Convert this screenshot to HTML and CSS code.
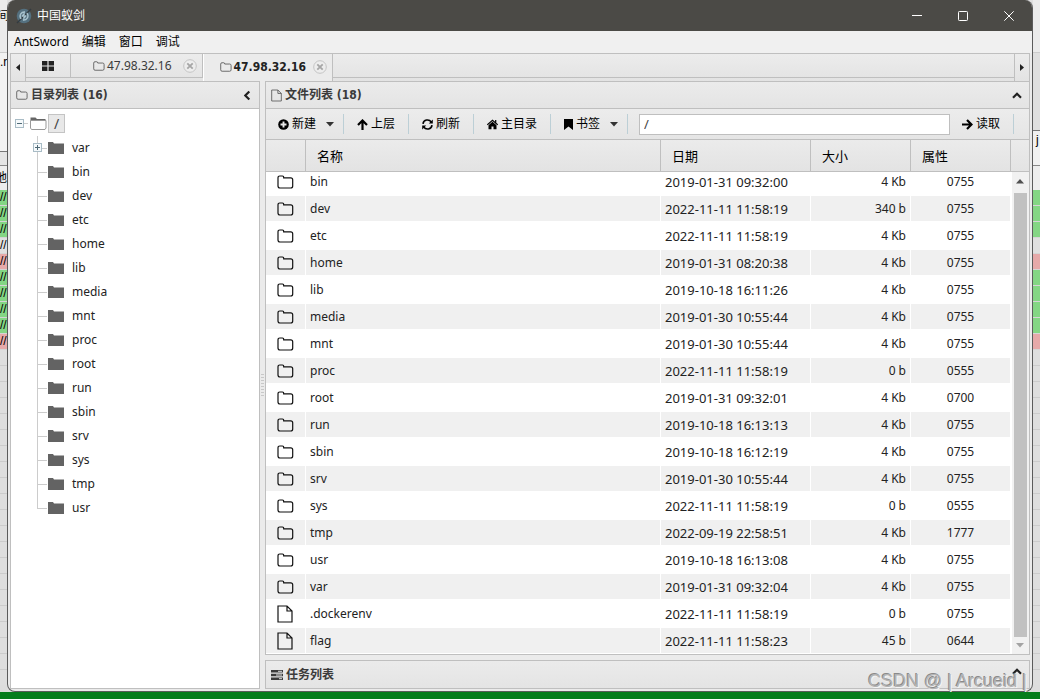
FILE: index.html
```html
<!DOCTYPE html>
<html lang="zh-CN">
<head>
<meta charset="utf-8">
<title>中国蚁剑</title>
<link rel="stylesheet" href="styles.css">
</head>
<body>
<svg class="sprite" aria-hidden="true">
  <symbol id="folder-o" viewBox="0 0 17 14"><path d="M1 2.8Q1 1 2.800 1H5.400Q6.700 1 6.700 2.800H13.700Q15.700 2.800 15.700 4.800V11Q15.700 13 13.700 13H3Q1 13 1 11Z" fill="none" stroke="currentColor" stroke-width="1.2"/></symbol>
  <symbol id="file-o" viewBox="0 0 16 18"><path d="M1 1H10L15 6V17H1ZM10 1V6H15" fill="none" stroke="currentColor" stroke-width="1.200"/></symbol>
  <symbol id="folder" viewBox="0 0 16 13"><path d="M0 0H5L6 1.500H16V12H0Z" fill="#636363"/></symbol>
  <symbol id="caret" viewBox="0 0 8 5"><path d="M0 0H8L4 4.500Z" fill="currentColor"/></symbol>
  <symbol id="chev" viewBox="0 0 10 7"><path d="M1 5.800L5 1.800L9 5.800" fill="none" stroke="currentColor" stroke-width="2.200"/></symbol>
  <symbol id="close" viewBox="0 0 14 14"><circle cx="7" cy="7" r="6.300" fill="#ededed" stroke="#c4c4c4"/><path d="M4.300 4.300L9.700 9.700M9.700 4.300L4.300 9.700" stroke="#a6a6a6" stroke-width="1.800"/></symbol>
</svg>
<div class="desktop">
  <div class="strip strip-left" aria-hidden="true">
    <div class="s-head">间</div><div class="s-pane">.r</div><div class="s-gap"></div><div class="s-title">地</div>
    <div class="s-row ok">//</div><div class="s-row ok">//</div><div class="s-row ok">//</div><div class="s-row">//</div><div class="s-row bad">//</div><div class="s-row ok">//</div><div class="s-row ok">//</div><div class="s-row ok">//</div><div class="s-row ok">//</div><div class="s-row bad">//</div>
    <div class="s-rest"></div>
  </div>
  <main class="window">
    <header class="titlebar">
      <svg class="logo" viewBox="0 0 16 16"><circle cx="8" cy="8" r="7.300" fill="#54707f"/><path d="M1 15L15 1" stroke="#333b40" stroke-width="1.500"/><path d="M5 11C2.500 7 5.500 3.500 9 4M11 5C13.500 9 10.500 12.500 7 12M6 8.500L8 6V10L10 7.500" fill="none" stroke="#a9c3ce" stroke-width="1.400"/></svg>
      <h1>中国蚁剑</h1>
      <div class="winctl">
        <button aria-label="最小化"><svg viewBox="0 0 10 10"><path d="M0 4.500H10" stroke="#fff"/></svg></button>
        <button aria-label="最大化"><svg viewBox="0 0 10 10"><rect x=".5" y=".5" width="9" height="9" rx=".8" fill="none" stroke="#fff"/></svg></button>
        <button aria-label="关闭"><svg viewBox="0 0 10 10"><path d="M.3 .3L9.700 9.700M9.700 .3L.3 9.700" stroke="#fff"/></svg></button>
      </div>
    </header>
    <nav class="menubar"><button>AntSword</button><button>编辑</button><button>窗口</button><button>调试</button></nav>
    <div class="content">
      <div class="tabbar">
        <button class="scroll-tab prev" aria-label="向左"><svg viewBox="0 0 4 7"><path d="M4 0V7L0 3.500Z" fill="#222"/></svg></button>
        <div class="tab home-tab"><button aria-label="主页"><svg class="grid-ico" viewBox="0 0 12 10"><path d="M0 0H5.400V4.400H0ZM6.600 0H12V4.400H6.600ZM0 5.600H5.400V10H0ZM6.600 5.600H12V10H6.600Z" fill="#222"/></svg></button></div>
        <div class="tab"><button><svg class="tab-folder"><use href="#folder-o"/></svg>47.98.32.16</button><button class="tab-close" aria-label="关闭标签"><svg><use href="#close"/></svg></button></div>
        <div class="tab active"><button><svg class="tab-folder"><use href="#folder-o"/></svg>47.98.32.16</button><button class="tab-close" aria-label="关闭标签"><svg><use href="#close"/></svg></button></div>
        <div class="tab-fill"></div>
        <button class="scroll-tab next" aria-label="向右"><svg viewBox="0 0 4 7"><path d="M0 0V7L4 3.500Z" fill="#222"/></svg></button>
      </div>
      <div class="panes">
        <section class="panel dirs">
          <div class="panel-head"><svg class="h-folder"><use href="#folder-o"/></svg><h2>目录列表 (16)</h2><button aria-label="折叠"><svg class="chev left"><use href="#chev"/></svg></button></div>
          <div class="tree">
            <div class="root"><button class="toggle" aria-label="收起"><svg viewBox="0 0 9 9"><rect x=".5" y=".5" width="8" height="8" fill="#f5f9fb" stroke="#a9bcc6"/><path d="M2 4.500H7" stroke="#4f6a76"/></svg></button><i class="dash"></i><svg class="open" viewBox="0 0 17 13"><path d="M.5 3V.5H5.500L7 2H15.500V4H.5Z" fill="#666"/><path d="M.5 3.500H16V11L15 12.500H1.500L.5 11Z" fill="#fff" stroke="#999"/></svg><button class="root-name">/</button></div>
            <ul>
              <li class="more"><button class="toggle" aria-label="展开"><svg viewBox="0 0 9 9"><rect x=".5" y=".5" width="8" height="8" fill="#f5f9fb" stroke="#a9bcc6"/><path d="M2 4.500H7M4.500 2V7" stroke="#4f6a76"/></svg></button><svg class="fo"><use href="#folder"/></svg>var</li>
              <li><svg class="fo"><use href="#folder"/></svg>bin</li>
              <li><svg class="fo"><use href="#folder"/></svg>dev</li>
              <li><svg class="fo"><use href="#folder"/></svg>etc</li>
              <li><svg class="fo"><use href="#folder"/></svg>home</li>
              <li><svg class="fo"><use href="#folder"/></svg>lib</li>
              <li><svg class="fo"><use href="#folder"/></svg>media</li>
              <li><svg class="fo"><use href="#folder"/></svg>mnt</li>
              <li><svg class="fo"><use href="#folder"/></svg>proc</li>
              <li><svg class="fo"><use href="#folder"/></svg>root</li>
              <li><svg class="fo"><use href="#folder"/></svg>run</li>
              <li><svg class="fo"><use href="#folder"/></svg>sbin</li>
              <li><svg class="fo"><use href="#folder"/></svg>srv</li>
              <li><svg class="fo"><use href="#folder"/></svg>sys</li>
              <li><svg class="fo"><use href="#folder"/></svg>tmp</li>
              <li><svg class="fo"><use href="#folder"/></svg>usr</li>
            </ul>
          </div>
        </section>
        <div class="splitter"><i></i></div>
        <div class="right">
          <section class="panel files">
            <div class="panel-head"><svg class="h-file"><use href="#file-o"/></svg><h2>文件列表 (18)</h2><button aria-label="折叠"><svg class="chev"><use href="#chev"/></svg></button></div>
            <div class="toolbar">
              <button class="drop"><svg class="ti" viewBox="0 0 11 11"><circle cx="5.500" cy="5.500" r="5.300"/><path d="M5.500 2.500V8.500M2.500 5.500H8.500" stroke="#eaeaea" stroke-width="1.900"/></svg>新建<svg class="caret"><use href="#caret"/></svg></button>
              <button><svg class="ti" viewBox="0 0 11 11"><path d="M5.500 11V2M1 6L5.500 1.500L10 6" fill="none" stroke="#000" stroke-width="2.200"/></svg>上层</button>
              <button><svg class="ti" viewBox="0 0 11 11"><path d="M1 4.800C1.500 .5 7 -.2 9.300 2.900M10 6.200C9.500 10.500 4 11.200 1.700 8.100" fill="none" stroke="#000" stroke-width="1.600"/><path d="M10.800 .5V4.500H6.800ZM.2 10.500V6.500H4.200Z"/></svg>刷新</button>
              <button><svg class="ti" viewBox="0 0 11 11"><path d="M5.500 2.700L9.500 6.200V10.300H6.500V7.400H4.500V10.300H1.500V6.200Z"/><path d="M.3 5.800L5.500 1.300L10.700 5.800M8.700 1V4" fill="none" stroke="#000" stroke-width="1.200"/></svg>主目录</button>
              <button class="drop"><svg class="mark" viewBox="0 0 9 11"><path d="M0 0H9V11L4.500 7.500L0 11Z"/></svg>书签<svg class="caret"><use href="#caret"/></svg></button>
              <input type="text" value="/" aria-label="路径">
              <button class="go"><svg class="ti" viewBox="0 0 11 11"><path d="M0 5.500H9M5 1L9.500 5.500L5 10" fill="none" stroke="#000" stroke-width="2.200"/></svg>读取</button>
            </div>
            <div class="grid-head">
              <table><colgroup><col class="c-ico"><col><col class="c-date"><col class="c-size"><col class="c-attr"></colgroup>
                <thead><tr><th></th><th>名称</th><th>日期</th><th>大小</th><th>属性</th></tr></thead></table>
            </div>
            <div class="grid-body">
              <div class="rows">
              <table><colgroup><col class="c-ico"><col><col class="c-date"><col class="c-size"><col class="c-attr"></colgroup>
                <tbody>
                <tr><td><svg class="f"><use href="#folder-o"/></svg></td><td>bin</td><td>2019-01-31 09:32:00</td><td>4 Kb</td><td>0755</td></tr>
                <tr><td><svg class="f"><use href="#folder-o"/></svg></td><td>dev</td><td>2022-11-11 11:58:19</td><td>340 b</td><td>0755</td></tr>
                <tr><td><svg class="f"><use href="#folder-o"/></svg></td><td>etc</td><td>2022-11-11 11:58:19</td><td>4 Kb</td><td>0755</td></tr>
                <tr><td><svg class="f"><use href="#folder-o"/></svg></td><td>home</td><td>2019-01-31 08:20:38</td><td>4 Kb</td><td>0755</td></tr>
                <tr><td><svg class="f"><use href="#folder-o"/></svg></td><td>lib</td><td>2019-10-18 16:11:26</td><td>4 Kb</td><td>0755</td></tr>
                <tr><td><svg class="f"><use href="#folder-o"/></svg></td><td>media</td><td>2019-01-30 10:55:44</td><td>4 Kb</td><td>0755</td></tr>
                <tr><td><svg class="f"><use href="#folder-o"/></svg></td><td>mnt</td><td>2019-01-30 10:55:44</td><td>4 Kb</td><td>0755</td></tr>
                <tr><td><svg class="f"><use href="#folder-o"/></svg></td><td>proc</td><td>2022-11-11 11:58:19</td><td>0 b</td><td>0555</td></tr>
                <tr><td><svg class="f"><use href="#folder-o"/></svg></td><td>root</td><td>2019-01-31 09:32:01</td><td>4 Kb</td><td>0700</td></tr>
                <tr><td><svg class="f"><use href="#folder-o"/></svg></td><td>run</td><td>2019-10-18 16:13:13</td><td>4 Kb</td><td>0755</td></tr>
                <tr><td><svg class="f"><use href="#folder-o"/></svg></td><td>sbin</td><td>2019-10-18 16:12:19</td><td>4 Kb</td><td>0755</td></tr>
                <tr><td><svg class="f"><use href="#folder-o"/></svg></td><td>srv</td><td>2019-01-30 10:55:44</td><td>4 Kb</td><td>0755</td></tr>
                <tr><td><svg class="f"><use href="#folder-o"/></svg></td><td>sys</td><td>2022-11-11 11:58:19</td><td>0 b</td><td>0555</td></tr>
                <tr><td><svg class="f"><use href="#folder-o"/></svg></td><td>tmp</td><td>2022-09-19 22:58:51</td><td>4 Kb</td><td>1777</td></tr>
                <tr><td><svg class="f"><use href="#folder-o"/></svg></td><td>usr</td><td>2019-10-18 16:13:08</td><td>4 Kb</td><td>0755</td></tr>
                <tr><td><svg class="f"><use href="#folder-o"/></svg></td><td>var</td><td>2019-01-31 09:32:04</td><td>4 Kb</td><td>0755</td></tr>
                <tr><td><svg class="d"><use href="#file-o"/></svg></td><td>.dockerenv</td><td>2022-11-11 11:58:19</td><td>0 b</td><td>0755</td></tr>
                <tr><td><svg class="d"><use href="#file-o"/></svg></td><td>flag</td><td>2022-11-11 11:58:23</td><td>45 b</td><td>0644</td></tr>
                </tbody></table>
              </div>
              <div class="scrollbar"><svg class="sb up" viewBox="0 0 8 5"><path d="M0 4.500H8L4 0Z"/></svg><div class="thumb"></div><svg class="sb down" viewBox="0 0 8 5"><path d="M0 0H8L4 4.500Z"/></svg></div>
            </div>
          </section>
          <section class="panel tasks">
            <div class="panel-head"><svg class="h-tasks" viewBox="0 0 12 10"><path d="M0 0H12V2.600H0ZM0 3.700H12V6.300H0ZM0 7.400H12V10H0Z" fill="#3b3b3b"/><path d="M7 1.300H11M5 5H11M8 8.700H11" stroke="#ddd"/></svg><h2>任务列表</h2><button aria-label="展开"><svg class="chev"><use href="#chev"/></svg></button></div>
          </section>
        </div>
      </div>
    </div>
  </main>
  <div class="strip strip-right" aria-hidden="true">
    <div class="s-head"></div><div class="s-pane"></div><div class="s-gap">j</div><div class="s-title"></div>
    <div class="s-row ok"></div><div class="s-row ok"></div><div class="s-row ok"></div><div class="s-row"></div><div class="s-row bad"></div><div class="s-row ok"></div><div class="s-row ok"></div><div class="s-row ok"></div><div class="s-row ok"></div><div class="s-row bad"></div>
    <div class="s-rest"></div>
  </div>
  <div class="green"></div>
  <div class="watermark">CSDN @ | Arcueid |</div>
</div>
</body>
</html>
```

FILE: styles.css
```css
* { box-sizing: border-box; }
body { margin: 0; font: 12px/18px "Noto Sans", "Noto Sans CJK SC", sans-serif; color: #222; }
button { font: inherit; color: inherit; background: none; border: 0; padding: 0; display: flex; align-items: center; }
svg { display: block; flex: none; }
h1, h2 { margin: 0; font-size: 12px; }
.sprite { position: absolute; width: 0; height: 0; }

.desktop { position: relative; display: grid; grid-template-columns: 7px 1fr 7px; grid-template-rows: 1fr 7px; height: 100vh; background: #dedede; overflow: hidden; }
.green { grid-column: 1 / -1; background: #057d1c; }
.strip { display: flex; flex-direction: column; overflow: hidden; background: #e0e0e0; color: #000; font-family: "Liberation Sans", "Noto Sans CJK SC", sans-serif; }
.s-head { height: 53px; padding-top: 7px; background: #ebebeb; border-bottom: 1px solid #ccc; text-indent: -3px; }
.s-pane { height: 99px; background: #f2f2f2; border-bottom: 1px solid #777; }
.s-gap { height: 14px; background: #e4e4e4; border-bottom: 1px solid #888; }
.s-title { height: 24px; background: #ededed; padding-top: 3px; text-indent: -5px; }
.s-row { height: 16px; border-bottom: 1px solid #d5d5d5; line-height: 15px; white-space: nowrap; }
.ok { background: #84d684; }
.bad { background: #e6a9a9; }
.s-rest { flex: 1; background: repeating-linear-gradient(#dedede 0 15px, #ccc 15px 16px); border-bottom: 7px solid #ddd; }
.strip-right .s-pane { height: 78px; background: #dfdfdf; }
.strip-right .s-gap { height: 35px; background: #f1f1f1; padding-left: 3px; }

.window { display: flex; flex-direction: column; min-width: 0; min-height: 0; border: 1px solid #5b5b5b; border-top: 0; border-radius: 8px; overflow: hidden; background: #ebebeb; }
.titlebar { display: flex; align-items: center; height: 31px; padding-left: 8px; background: #4b4a46; color: #fff; }
.logo { width: 16px; height: 16px; }
.titlebar h1 { margin-left: 5px; font-weight: 400; flex: 1; }
.winctl { display: flex; }
.winctl button { width: 46px; height: 31px; justify-content: center; }
.winctl svg { width: 10px; height: 10px; }
.menubar { display: flex; gap: 13px; height: 22px; padding-left: 6px; background: #f0f0f0; color: #000; }

.content { flex: 1; display: flex; flex-direction: column; min-height: 0; padding: 0 2px 2px; }
.tabbar { display: flex; height: 28px; border: 1px solid #bfbfbf; border-bottom: 0; background: linear-gradient(#ececec, #e3e3e3); }
.scroll-tab { width: 15px; justify-content: center; }
.scroll-tab svg { width: 4px; height: 7px; }
.prev { border-right: 1px solid #bfbfbf; }
.next { border-left: 1px solid #bfbfbf; }
.tab { display: flex; align-items: center; height: 24px; border-right: 1px solid #bfbfbf; border-bottom: 1px solid #bfbfbf; padding: 0 5px 0 22px; gap: 11px; color: #3b3b3b; }
.tab button { gap: 2px; }
.home-tab { width: 45px; padding: 0; justify-content: center; }
.grid-ico { width: 12px; height: 10px; }
.tab-folder { width: 12px; height: 10px; }
.tab-close svg { width: 14px; height: 14px; }
.tab.active { height: 27px; padding: 0 5px 2px 16px; gap: 7px; border-bottom: 0; border-left: 1px solid #fff; background: #ebebeb; font-family: "DejaVu Sans Condensed", "Noto Sans", sans-serif; font-weight: 700; color: #222; }
.tab-fill { flex: 1; height: 24px; border-bottom: 1px solid #bfbfbf; }
.tab-folder, .h-folder, .h-file { color: #555; }

.panes { flex: 1; display: flex; min-height: 0; }
.panel { border: 1px solid #bfbfbf; display: flex; flex-direction: column; min-height: 0; }
.panel-head { display: flex; align-items: center; flex: none; height: 27px; padding: 0 7px 0 5px; background: linear-gradient(#ebebeb, #e4e4e4); border-bottom: 1px solid #bfbfbf; color: #3b3b3b; }
.panel-head h2 { flex: 1; margin-left: 3px; font-family: "DejaVu Sans Condensed", "Noto Sans CJK SC", sans-serif; }
.h-folder { width: 12px; height: 10px; }
.h-file { width: 11px; height: 13px; }
.h-tasks { width: 12px; height: 10px; }
.chev { width: 10px; height: 7px; color: #222; }
.chev.left { transform: rotate(-90deg); }
.dirs { width: 250px; flex: none; }
.tree { flex: 1; background: #fff; padding: 2px 0 0 4px; }
.root { display: flex; align-items: center; height: 25px; }
.toggle svg { width: 9px; height: 9px; }
.dash { width: 4px; margin-right: 2px; border-top: 1px solid #ccc; }
.open { width: 17px; height: 13px; }
.root-name { width: 17px; height: 19px; margin-left: 1px; justify-content: center; border: 1px solid #c4c4c4; background: #e8e8e8; color: #444; font-size: 14px; }
.tree ul { list-style: none; margin: 0 0 0 22px; padding: 0; }
.tree li { position: relative; display: flex; align-items: center; height: 24px; padding-left: 11px; gap: 8px; }
.tree li::before { content: ""; position: absolute; left: 0; top: 0; width: 9px; height: 12px; border-left: 1px solid #ccc; border-bottom: 1px solid #ccc; }
.tree li:not(:last-child)::after { content: ""; position: absolute; left: 0; top: 12px; height: 12px; border-left: 1px solid #ccc; }
.tree li .toggle { position: absolute; left: -4px; top: 7px; z-index: 1; }
.fo { width: 16px; height: 13px; }

.splitter { width: 5px; display: flex; align-items: center; justify-content: center; }
.splitter i { width: 3px; height: 22px; background: repeating-linear-gradient(#c8c8c8 0 1px, #ebebeb 1px 3px); }
.right { flex: 1; display: flex; flex-direction: column; gap: 5px; min-width: 0; }
.files { flex: 1; }
.tasks .panel-head { border-bottom: 0; }
.tasks .panel-head button { align-self: flex-start; padding-top: 7px; }

.toolbar { display: flex; align-items: center; flex: none; height: 31px; background: linear-gradient(#ececec, #e5e5e5); border-bottom: 1px solid #bfbfbf; color: #000; }
.toolbar button { height: 20px; padding: 0 13px; gap: 3px; border-right: 1px solid #bccfd6; white-space: nowrap; }
.toolbar .drop { padding-right: 9px; }
.toolbar button:first-child { padding-left: 12px; }
.ti { width: 11px; height: 11px; }
.mark { width: 9px; height: 11px; }
.caret { width: 8px; height: 5px; margin-left: 7px; color: #333; }
.toolbar input { flex: 1; min-width: 0; height: 21px; margin-left: 11px; padding: 0 4px; border: 1px solid #bfbfbf; background: #fff; font: inherit; font-size: 13px; color: #444; }
.toolbar .go { margin-right: 15px; padding-left: 12px; }

table { width: 100%; table-layout: fixed; border-collapse: separate; border-spacing: 0; }
.c-ico { width: 40px; }
.c-date { width: 150px; }
.c-size, .c-attr { width: 100px; }
.grid-head { flex: none; padding-right: 18px; background: linear-gradient(#ebebeb, #e3e3e3); border-bottom: 1px solid #bfbfbf; }
th { height: 31px; padding: 0 11px; text-align: left; font-weight: 400; color: #000; border-right: 1px solid #bfbfbf; font-size: 13px; }
.grid-body { flex: 1; display: flex; min-height: 0; background: #fff; }
.rows { flex: 1; display: flex; flex-direction: column; justify-content: flex-end; overflow: hidden; }
td { height: 27px; padding: 0 4px; border: solid #fff; border-width: 1px 1px 1px 0; white-space: nowrap; }
tr:nth-child(even) td { background: #f0f0f0; }
td:nth-child(1) { padding-left: 11px; color: #111; }
td:nth-child(3) { font-size: 13px; }
td:nth-child(4) { text-align: right; }
td:nth-child(5) { text-align: center; }
.f { width: 17px; height: 14px; }
.d { width: 16px; height: 18px; }
.scrollbar { width: 18px; padding: 7px 1px 6px 0; display: flex; flex-direction: column; align-items: center; background: #f1f1f1; border-left: 1px solid #fff; }
.thumb { flex: 1; width: 13px; margin: 9px 0 6px; background: #c1c1c1; }
.sb { width: 8px; height: 5px; }
.up { fill: #505050; }
.down { fill: #a3a3a3; }

.watermark { position: absolute; right: 13px; bottom: 6px; font: 18px/24px "Liberation Sans", sans-serif; color: #b4b4b4; text-shadow: -1px -1px 0 #8a8a8a, 1px 1px 0 #f4f4f4; pointer-events: none; }
```
